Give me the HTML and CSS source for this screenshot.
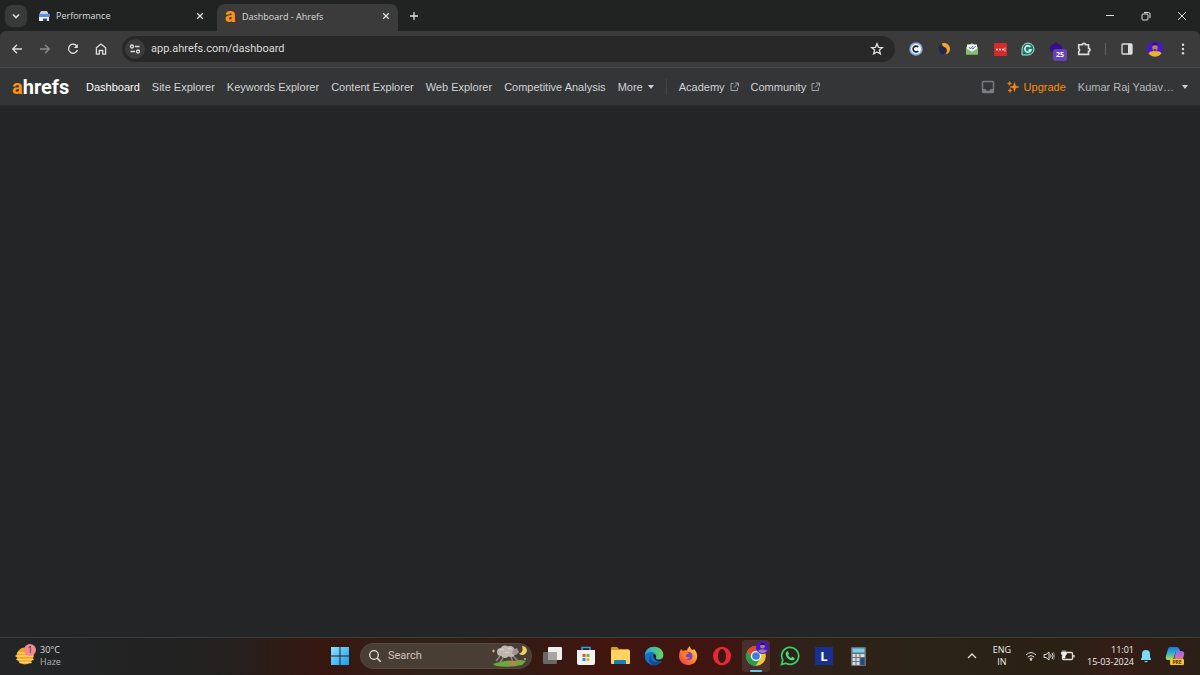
FILE: index.html
```html
<!DOCTYPE html>
<html lang="en">
<head>
<meta charset="utf-8">
<title>Dashboard - Ahrefs</title>
<link rel="stylesheet" href="styles.css">
</head>
<body>
<div class="screen">
<header class="tabstrip">
  <button class="tab-search" aria-label="Search tabs"><svg width="10" height="10" viewBox="0 0 10 10"><path d="M2 3.5l3 3 3-3" class="line bold"/></svg></button>
  <div class="tab">
    <svg width="12" height="12" viewBox="0 0 12 12"><path d="M3 1h6l2 4H1z" fill="#c5d3e6"/><rect x="1" y="4" width="11" height="3" fill="#5b8de0"/><rect x="1" y="7" width="10" height="4" fill="#edf1f7"/><path d="M5 11V8h4v3z" fill="#35455c"/><path d="M6 7v2M8 7v2" stroke="#fff"/></svg>
    <span class="tab-title">Performance</span>
    <button class="close" aria-label="Close tab"><svg width="8" height="8" viewBox="0 0 8 8"><path d="M1.2 1.2l5.6 5.6M6.8 1.2l-5.6 5.6" class="line"/></svg></button>
  </div>
  <div class="tab active">
    <span class="favicon">a</span>
    <span class="tab-title">Dashboard - Ahrefs</span>
    <button class="close" aria-label="Close tab"><svg width="8" height="8" viewBox="0 0 8 8"><path d="M1.2 1.2l5.6 5.6M6.8 1.2l-5.6 5.6" class="line"/></svg></button>
  </div>
  <button class="new-tab" aria-label="New tab"><svg width="10" height="10" viewBox="0 0 10 10"><path d="M5 1v8M1 5h8" class="line"/></svg></button>
  <div class="window-controls">
    <button aria-label="Minimize"><svg width="10" height="10" viewBox="0 0 10 10"><path d="M1 4.5h8" class="line thin"/></svg></button>
    <button aria-label="Restore"><svg width="10" height="10" viewBox="0 0 10 10"><rect x="1" y="3" width="6" height="6" rx="1" class="line thin"/><path d="M3 1.500h4.500q1.500 0 1.500 1.500v4" class="line thin"/></svg></button>
    <button aria-label="Close"><svg width="10" height="10" viewBox="0 0 10 10"><path d="M1 1l8 8M9 1L1 9" class="line thin"/></svg></button>
  </div>
</header>

<div class="toolbar">
  <button class="tool" aria-label="Back"><svg width="12" height="12" viewBox="0 0 12 12"><path d="M11 6H2M6 1.700L1.700 6 6 10.300" class="line"/></svg></button>
  <button class="tool dim" aria-label="Forward"><svg width="12" height="12" viewBox="0 0 12 12"><path d="M1 6h9M6 1.700L10.300 6 6 10.300" class="line"/></svg></button>
  <button class="tool" aria-label="Reload"><svg width="12" height="12" viewBox="0 0 12 12"><path d="M10 3.500A4.500 4.500 0 1 0 10.400 7" class="line"/><path d="M10.800 1v4h-4z" fill="#dedede"/></svg></button>
  <button class="tool" aria-label="Home"><svg width="12" height="12" viewBox="0 0 12 12"><path d="M1.400 4.700L6 1 10.600 4.700v6.500H7.700V7.500H4.300v3.700H1.400z" class="line"/></svg></button>
  <div class="address">
    <button class="site-info" aria-label="Site information"><svg width="12" height="12" viewBox="0 0 12 12"><circle cx="3" cy="3.500" r="1.500" class="line"/><path d="M6 3.500h4.500M1.500 8.500H6" class="line"/><circle cx="9" cy="8.500" r="1.500" class="line"/></svg></button>
    <label class="url"><input type="text" aria-label="Address" value="app.ahrefs.com/dashboard"></label>
    <button class="tool" aria-label="Bookmark"><svg width="14" height="14" viewBox="0 0 14 14"><path d="M7 1.700l1.500 3.600 3.900.3-3 2.500 1 3.800L7 9.900l-3.400 2 1-3.800-3-2.500 3.900-.3z" class="line"/></svg></button>
  </div>
  <div class="extensions">
    <button class="tool" aria-label="Copyright checker"><svg width="14" height="14" viewBox="0 0 14 14"><circle cx="7" cy="7" r="6.700" fill="#82abe5"/><circle cx="7" cy="7" r="5" fill="#fff"/><path d="M9.200 5.100a2.900 2.900 0 1 0 0 3.800" fill="none" stroke="#101d3c" stroke-width="1.600"/></svg></button>
    <button class="tool" aria-label="Similar sites"><svg width="14" height="14" viewBox="0 0 14 14"><path d="M3 2.500c2 2 5 2 6 4.500s-.5 4-3 5.500C2 11 0 6 3 2.500z" fill="#20264d"/><path d="M5 1.500c4-1.500 8 1.500 8 5.500 0 3-2 5-4.500 5.500C11 9 10 6 7.500 5 6 4.500 5 3.500 5 1.500z" fill="#f5a22d"/></svg></button>
    <button class="tool" aria-label="Mail tracker"><svg width="14" height="14" viewBox="0 0 14 14"><path d="M1 5l6-4 6 4v7.500H1z" fill="#84bd72"/><path d="M2 2.500h10v5L7 10 2 7.500z" fill="#f3f5f3"/><path d="M4 5l1.500 2L8 4M7 6.500L8 7l2.500-3" fill="none" stroke="#4e65b5"/><path d="M1 6l6 4 6-4v6.500H1z" fill="#84bd72"/></svg></button>
    <button class="tool" aria-label="Password manager"><svg width="14" height="14" viewBox="0 0 14 14"><rect x="1" y="1" width="13" height="13" rx="1" fill="#d62a29"/><circle cx="4" cy="7.500" r="1" fill="#fff"/><circle cx="7" cy="7.500" r="1" fill="#fff"/><circle cx="10" cy="7.500" r="1" fill="#fff"/><path d="M12 5.500v4" stroke="#fff" stroke-width=".7"/></svg></button>
    <button class="tool" aria-label="Grammar checker"><svg width="14" height="14" viewBox="0 0 14 14"><path d="M1 13V7a6 6 0 1 1 6 6z" fill="#14806c" stroke="#b8ddd3"/><path d="M9.500 5A3.200 3.200 0 1 0 10 8H7.500" fill="none" stroke="#fff" stroke-width="1.400"/></svg></button>
    <button class="tool" aria-label="Extension, 25 notifications"><svg width="14" height="14" viewBox="0 0 14 14"><path d="M7 0l6 4.500V9l-6 2-6-2V4.500z" fill="#34108b"/></svg><span class="badge">25</span></button>
    <button class="tool" aria-label="Extensions"><svg width="14" height="14" viewBox="0 0 14 14"><path d="M1.700 2.700H5.500a1.500 1.500 0 0 1 3 0h3v3.700a1.500 1.500 0 0 1 0 3v3H1.700V9.500a1.700 1.700 0 0 0 0-3z" class="line bold"/></svg></button>
    <span class="divider"></span>
    <button class="tool" aria-label="Side panel"><svg width="12" height="12" viewBox="0 0 12 12"><rect x="1" y="1" width="10" height="10" rx="1" class="line"/><path d="M7 1h4v10H7z" fill="#dedede"/></svg></button>
    <button class="tool" aria-label="Profile"><svg width="16" height="16" viewBox="0 0 16 16"><circle cx="8" cy="8" r="7.800" fill="#4a13dc"/><path d="M1.500 12.300Q3 10 8 10t6.500 2.300a7.800 7.800 0 0 1-13 0z" fill="#e6b52d"/><ellipse cx="8" cy="6.500" rx="2.600" ry="4" fill="#c28364"/><path d="M5.300 5Q5 1.500 8 1.500T10.700 5Q8 3.500 5.300 5z" fill="#2b222b"/><path d="M6.500 9h3" stroke="#38282b" stroke-width="1.400"/></svg></button>
    <button class="tool" aria-label="Menu"><svg width="12" height="12" viewBox="0 0 12 12"><circle cx="6" cy="1.700" r="1.200" fill="#dedede"/><circle cx="6" cy="6" r="1.200" fill="#dedede"/><circle cx="6" cy="10.300" r="1.200" fill="#dedede"/></svg></button>
  </div>
</div>

<nav class="nav">
  <a class="logo" href="#"><span class="logo-a">a</span>hrefs</a>
  <div class="links">
    <a class="current" href="#">Dashboard</a>
    <a href="#">Site Explorer</a>
    <a href="#">Keywords Explorer</a>
    <a href="#">Content Explorer</a>
    <a href="#">Web Explorer</a>
    <a href="#">Competitive Analysis</a>
    <button class="menu-link">More <span class="caret"></span></button>
  </div>
  <div class="links outside">
    <a href="#">Academy <svg width="9" height="9" viewBox="0 0 9 9"><path d="M3.500 1.500H1v7h6.500V5.500M5 1h3.500v3.500M8.500 1L4 5.500" class="ext-line"/></svg></a>
    <a href="#">Community <svg width="9" height="9" viewBox="0 0 9 9"><path d="M3.500 1.500H1v7h6.500V5.500M5 1h3.500v3.500M8.500 1L4 5.500" class="ext-line"/></svg></a>
  </div>
  <div class="links account">
    <button class="inbox" aria-label="Inbox"><svg width="14" height="14" viewBox="0 0 14 14"><rect x="1.500" y="1.500" width="11" height="11" rx="1" fill="none" stroke="#7b7d7f" stroke-width="1.500"/><path d="M1.500 9h3q.5 2 2.500 2t2.500-2h3v3.500h-11z" fill="#7b7d7f"/></svg></button>
    <a class="upgrade" href="#"><svg width="12" height="12" viewBox="0 0 12 12"><path d="M7.500 1.500l1 3.500 3.500 1-3.500 1-1 3.500-1-3.500L3 6l3.500-1zM2.500 .5l.6 1.400 1.400.6-1.400.6-.6 1.400-.6-1.400L.5 2.500l1.400-.6zM3 7.500l.6 1.400 1.400.6-1.400.6-.6 1.400-.6-1.400L1 9.500l1.400-.6z" fill="#ff8b0d" stroke="#ff8b0d" stroke-width=".5"/></svg>Upgrade</a>
    <button class="menu-link user">Kumar Raj Yadav… <span class="caret"></span></button>
  </div>
</nav>

<main class="content"></main>

<footer class="taskbar">
  <button class="weather">
    <svg width="24" height="24" viewBox="0 0 24 24"><circle cx="11" cy="12" r="8.500" fill="#f4a51d"/><path d="M4 9h11M2 12h17M3 15.500h16M6 18.500h11" stroke="#ffd27b" stroke-width="1.500" stroke-linecap="round"/><circle cx="16" cy="6" r="6" fill="#f08b93"/><text x="16" y="9" class="count">1</text></svg>
    <span>30°C<br><span class="soft">Haze</span></span>
  </button>
  <div class="apps">
    <button class="app" aria-label="Start"><svg width="20" height="20" viewBox="0 0 20 20"><defs><linearGradient id="win" x2="1" y2="1"><stop stop-color="#8de4ff"/><stop offset="1" stop-color="#159df0"/></linearGradient></defs><path d="M1 1h8.500v8.500H1zM10.500 1H19v8.500h-8.500zM1 10.500h8.500V19H1zM10.500 10.500H19V19h-8.500z" fill="url(#win)"/></svg></button>
    <label class="search">
      <svg width="14" height="14" viewBox="0 0 14 14"><circle cx="6" cy="6" r="4.300" class="line"/><path d="M9.200 9.200l3.600 3.600" class="line bold"/></svg>
      <input type="text" placeholder="Search" aria-label="Search">
      <svg width="38" height="24" viewBox="0 0 38 24"><path d="M2 20q14-5 21-3 6-2 12 0l-4 4Q18 24 5 22z" fill="#6fa83a"/><path d="M18 21l2-4 6 0-2 5z" fill="#bd824e"/><path d="M9 12l-4 5M12 14l-3 4M22 12l5 5M20 13l2 5" stroke="#948a86" stroke-width="1.500"/><g fill="#bdb6b1"><circle cx="10" cy="8" r="4"/><circle cx="14" cy="6" r="4.500"/><circle cx="19" cy="7" r="5"/><circle cx="14" cy="10" r="4"/><circle cx="20" cy="9" r="4"/></g><path d="M22 6l4-2 2 4-3 3-4-1z" fill="#a1938f"/><path d="M9 6q2-2 4 0M14 9q2-2 4 0M17 5q2-2 4 0" fill="none" stroke="#dfd8d1"/><path d="M31 2a4.500 4.500 0 1 1-3 7.500q5-1 3-7.500z" fill="#f2ce62"/><path d="M1 7h3M2.500 5.500v3M33 15h2M34 14v2" stroke="#d8b66f"/></svg>
    </label>
    <button class="app" aria-label="Task view"><svg width="20" height="20" viewBox="0 0 20 20"><rect x="6" y="1" width="14" height="13" rx="1" fill="#eee"/><rect x="1" y="6" width="14" height="12" rx="1" fill="#696867"/><path d="M6 6h9v8H6z" fill="#a8a5a3"/></svg></button>
    <button class="app" aria-label="Store"><svg width="20" height="20" viewBox="0 0 20 20"><path d="M6 5V1.500h8V5" fill="none" stroke="#27a7e6" stroke-width="1.500"/><path d="M1 4h18v13q0 2-2 2H3q-2 0-2-2z" fill="#f2f2f2"/><path d="M6.500 8h3v3h-3z" fill="#e95030"/><path d="M10.500 8h3v3h-3z" fill="#71b52b"/><path d="M6.500 12h3v3h-3z" fill="#209ad7"/><path d="M10.500 12h3v3h-3z" fill="#f3b51e"/></svg></button>
    <button class="app" aria-label="Files"><svg width="20" height="20" viewBox="0 0 20 20"><path d="M1 2q0-1 1-1h5l2 2h9q1 0 1 1v5H1z" fill="#d99a24"/><rect x="1" y="4" width="19" height="14" rx="1" fill="#ffd35e"/><path d="M4 18v-3q0-1 1-1h10q1 0 1 1v3z" fill="#167fbd"/></svg></button>
    <button class="app" aria-label="Edge"><svg width="20" height="20" viewBox="0 0 20 20"><defs><linearGradient id="edge" x2="1"><stop stop-color="#20a5e8"/><stop offset="1" stop-color="#67d750"/></linearGradient></defs><circle cx="10" cy="10" r="9.300" fill="#176fc7"/><path d="M.7 9C1.500 4 5 .7 10 .7c6 0 9.300 4 9.300 8 0 3-2 4.500-5 4.500-2 0-3-1-2-2C13 7 6 3 .7 9z" fill="url(#edge)"/><path d="M7 9c-2 5 3 9 10 6-2 3-5 4.500-8 4.200C5 17 4 12 7 9z" fill="#134a91"/><path d="M9 9q3-2 3 2-1 2 2 3 3 0 6-2l-1 3q-9 2-10-6z" fill="#3d1512"/></svg></button>
    <button class="app" aria-label="Firefox"><svg width="20" height="20" viewBox="0 0 20 20"><defs><linearGradient id="fox" x1="1" x2="0" y2="1"><stop stop-color="#ffe34b"/><stop offset=".5" stop-color="#ff8128"/><stop offset="1" stop-color="#ec2c64"/></linearGradient></defs><path d="M3 3l2 2q2-1 4-.5Q9 2 12 0q0 3 3 4l1-1q4 4 3 9c-1 5-5 7-9 7-5 0-9-4-9-9q0-4 2-7z" fill="url(#fox)"/><circle cx="10.500" cy="10" r="4" fill="#7941cf"/><path d="M4 8q3-3 7-1l-3 2q-1 3 4 2-3 4-7 1z" fill="#ff7a23"/></svg></button>
    <button class="app" aria-label="Opera"><svg width="20" height="20" viewBox="0 0 20 20"><ellipse cx="10" cy="10" rx="9" ry="9.300" fill="#e42b34"/><ellipse cx="10" cy="10" rx="4" ry="7" fill="#3c1610"/></svg></button>
    <button class="app running" aria-label="Chrome"><svg width="22" height="22" viewBox="0 0 20 20"><circle cx="10" cy="10" r="9" fill="#f1c736"/><path d="M2.200 5.500A9 9 0 0 1 17.800 5.500H10a4.500 4.500 0 0 0-4 6.800z" fill="#e84635"/><path d="M2.200 5.500a9 9 0 0 0 7.300 13.500l4.300-6.500a4.500 4.500 0 0 1-7.700 0z" fill="#269d51"/><circle cx="10" cy="10" r="4.500" fill="#fff"/><circle cx="10" cy="10" r="3.500" fill="#3780e5"/></svg><svg class="profile-badge" width="13" height="13" viewBox="0 0 16 16"><circle cx="8" cy="8" r="8" fill="#4a13dc"/><path d="M2 12q6-4 12 0-6 6-12 0z" fill="#9a829c"/><circle cx="8" cy="6.500" r="2.800" fill="#b48175"/><path d="M5 5q0-3 3-3t3 3z" fill="#241b31"/></svg></button>
    <button class="app" aria-label="WhatsApp"><svg width="20" height="20" viewBox="0 0 20 20"><path d="M1.500 18.500l1.300-4.500A8.500 8.500 0 1 1 6 17.200z" fill="none" stroke="#31d36b" stroke-width="1.700"/><path d="M6.500 5.500l1.300-.2 1.200 2.500-1 1.200q1 2 3 3l1.300-1.200 2.300 1.200q0 2.500-2.700 2.500C8 14 4 9 6.500 5.500z" fill="#4bdc7d"/></svg></button>
    <button class="app" aria-label="L"><span class="letter-app">L</span></button>
    <button class="app" aria-label="Calculator"><svg width="20" height="20" viewBox="0 0 20 20"><rect x="3" y="1" width="15" height="19" rx="1" fill="#687179"/><path d="M4.500 2.500h12v4h-12z" fill="#70d4ee"/><path d="M4.500 8h3v3h-3zM8.500 8h3v3h-3zM4.500 12h3v3h-3zM8.500 12h3v3h-3zM4.500 16h3v3h-3zM8.500 16h3v3h-3zM12.500 8h4v3h-4z" fill="#d5dde1"/><path d="M12.500 12h4v7h-4z" fill="#234a7b"/></svg></button>
  </div>
  <div class="tray">
    <button aria-label="Hidden icons"><svg width="10" height="10" viewBox="0 0 10 10"><path d="M1 7l4-4 4 4" class="line"/></svg></button>
    <button class="language">ENG<br>IN</button>
    <button class="status" aria-label="Network, volume and battery">
      <svg width="12" height="12" viewBox="0 0 12 12"><path d="M1 5q5-5 10 0M2.800 7q3.200-3 6.400 0M4.500 8.700q1.500-1.400 3 0" class="line thin"/><circle cx="6" cy="9.800" r="1" fill="#eee"/></svg>
      <svg width="12" height="12" viewBox="0 0 12 12"><path d="M1 4.500h2L6 2v8L3 7.500H1zM7.500 4.500q1.500 1.500 0 3M9 3q2.500 3 0 6" class="line thin"/><path d="M10.500 2q2 4 0 8" stroke="#777" fill="none"/></svg>
      <svg width="14" height="12" viewBox="0 0 14 12"><path d="M5.500 2.500h5q1 0 1 1v5q0 1-1 1H2.500q-1 0-1-1V6M13 5v2.500" class="line"/><path d="M2 0v2M4 0v2M.5 2h5v2L4 6v2H2V6L.5 4z" fill="#eee" stroke="#eee" stroke-width=".7"/></svg>
    </button>
    <button class="clock">11:01<br>15-03-2024</button>
    <button aria-label="Notifications"><svg width="12" height="14" viewBox="0 0 12 14"><path d="M1 10l1-2V5q0-4 4-4t4 4v3l1 2v1H1z" fill="#7bdcf5"/><path d="M4 12h4q-2 2.500-4 0z" fill="#7bdcf5"/></svg></button>
    <button class="copilot" aria-label="Copilot preview"><svg width="22" height="20" viewBox="0 0 22 20"><defs><linearGradient id="cop1" x2="0" y2="1"><stop stop-color="#1677e5"/><stop offset=".5" stop-color="#32b8c4"/><stop offset="1" stop-color="#c6d748"/></linearGradient><linearGradient id="cop2" x2="0" y2="1"><stop stop-color="#9c68ef"/><stop offset="1" stop-color="#f2748f"/></linearGradient></defs><path d="M6 1h7q2 0 3 4h-4L9 14H4q-3 0-2-4l2-7q.5-2 2-2z" fill="url(#cop1)"/><path d="M12 5h5q4 0 3 4l-2 7h-7q-2 0-3-2h2z" fill="url(#cop2)"/><rect x="6" y="13" width="14" height="6" rx="1" fill="#f8c526"/><text x="13" y="18" class="pre">PRE</text></svg></button>
  </div>
</footer>
</div>
</body>
</html>
```
FILE: styles.css
```css
* { box-sizing: border-box; }
body { margin: 0; background: #232526; color: #dedede; font-family: "Open Sans", "Noto Sans", sans-serif; }
button { display: flex; align-items: center; justify-content: center; padding: 0; border: 0; background: none; color: inherit; font: inherit; }
input { min-width: 0; padding: 0; border: 0; outline: 0; background: none; color: inherit; font: inherit; }
a { color: inherit; text-decoration: none; }
svg { display: block; flex: none; }
.line { fill: none; stroke: #dedede; stroke-width: 1.3; }
.thin { stroke-width: 1; }
.bold { stroke-width: 1.6; }
.screen { display: flex; flex-direction: column; min-height: 100vh; }

.tabstrip { display: flex; align-items: center; height: 31px; padding-left: 5px; background: #202322; }
.tab-search { width: 22px; height: 22px; border-radius: 7px; background: #383a39; }
.tab { display: flex; align-items: center; gap: 6px; width: 180px; height: 27px; margin-left: 10px; padding: 0 13px 0 1px; font-size: 9px; }
.tab.active { align-self: flex-end; width: 181px; margin-left: 0; padding: 0 8px 3px; border-radius: 8px 8px 0 0; background: #3b3b3b; }
.tab-title { flex: 1; }
.favicon { width: 11px; color: #ff910f; font: 900 20px/20px Roboto, sans-serif; }
.active .favicon { padding-bottom: 3px; }
.new-tab { width: 32px; height: 28px; }
.window-controls { display: flex; margin-left: auto; }
.window-controls button { width: 36px; height: 30px; }

.toolbar { display: flex; align-items: center; height: 37px; padding: 0 3px; border-bottom: 1px solid #4a4b4b; border-radius: 6px 6px 0 0; background: #3b3b3b; }
.tool { position: relative; width: 28px; height: 26px; }
.dim { opacity: .5; }
.address { display: flex; flex: 1; align-items: center; height: 26px; margin: 0 7px; padding: 0 4px 0 3px; border-radius: 13px; background: #282828; }
.site-info { width: 20px; height: 20px; margin-right: 6px; border-radius: 10px; background: #3b3b3b; }
.url { flex: 1; font: 11px/16px Roboto, "Open Sans", sans-serif; }
.url input { display: block; width: 100%; }
.extensions { display: flex; align-items: center; }
.badge { position: absolute; left: 11px; top: 13px; padding: 0 3px; border-radius: 3px; background: #6542b5; color: #fff; font: bold 7px/12px "Open Sans", sans-serif; }
.divider { width: 1px; height: 12px; margin: 0 7px; background: #626262; }

.nav { display: flex; align-items: center; height: 38px; padding: 0 12px; border-bottom: 1px solid #2a2c2e; background: #333537; color: #d2d3d4; font: 11px/16px "Liberation Sans", Arial, sans-serif; }
.logo { width: 58px; margin-right: 16px; color: #fff; font: bold 20px/24px Roboto, sans-serif; }
.logo-a { color: #ff910f; }
.links { display: flex; align-items: center; gap: 12px; white-space: nowrap; }
.links a, .menu-link { display: flex; align-items: center; gap: 5px; }
.links .current { color: #fff; }
.caret { border: 3px solid transparent; border-top: 4px solid #cfcfcf; border-bottom: 0; }
.outside { margin-left: 12px; padding-left: 12px; border-left: 1px solid #444648; }
.ext-line { fill: none; stroke: #a0a2a3; stroke-width: 1; }
.account { margin-left: auto; }
.links .upgrade { color: #ff8b0d; }
.user { color: #b6b8b9; }
.user .caret { margin-left: 3px; }

.content { flex: 1; }

.taskbar { display: grid; grid-template-columns: 1fr auto 1fr; align-items: center; height: 38px; padding: 0 2px 1px 0; border-top: 1px solid #3a3d3f; background: linear-gradient(90deg, #232527 0%, #222120 18%, #371710 27%, #302219 36%, #321b13 43%, #40160f 50%, #401410 60%, #30211a 66%, #2b2315 76%, #2a2114 88%, #351d16 93%, #291f17 100%); }
.weather { justify-self: start; gap: 2px; padding-left: 14px; font-size: 9px; line-height: 12px; text-align: left; }
.soft { color: #b5b5b5; }
.count { fill: #4b1d21; font-size: 9px; text-anchor: middle; }
.apps { display: flex; align-items: center; gap: 6px; }
.app { position: relative; width: 28px; height: 32px; }
.search { display: flex; align-items: center; gap: 6px; width: 172px; height: 26px; padding: 0 2px 0 7px; border: 1px solid #574a3f; border-radius: 13px; background: #483e34; font: 11px/16px Roboto, "Open Sans", sans-serif; }
.search input { flex: 1; width: 40px; }
.search input::placeholder { color: #ccc6c0; opacity: 1; }
.running { border-radius: 4px; background: #49302a; }
.running::after { content: ""; position: absolute; left: 8px; bottom: 0; width: 12px; height: 2px; border-radius: 1px; background: #67c7ee; }
.profile-badge { position: absolute; right: 1px; top: 1px; }
.letter-app { width: 18px; height: 18px; background: #173192; color: #fff; font: bold 13px/18px "Open Sans", sans-serif; }
.tray { display: flex; align-items: center; justify-self: end; padding-right: 12px; color: #eee; font-size: 9px; line-height: 12px; }
.language { margin: 0 14px 0 16px; }
.status { gap: 6px; }
.clock { margin: 0 6px 0 12px; text-align: right; }
.copilot { margin-left: 12px; }
.pre { fill: #4a3500; font: bold 5px "Open Sans", sans-serif; text-anchor: middle; }
.screen { background: linear-gradient(#202322 0 40px, transparent 40px); }
```
